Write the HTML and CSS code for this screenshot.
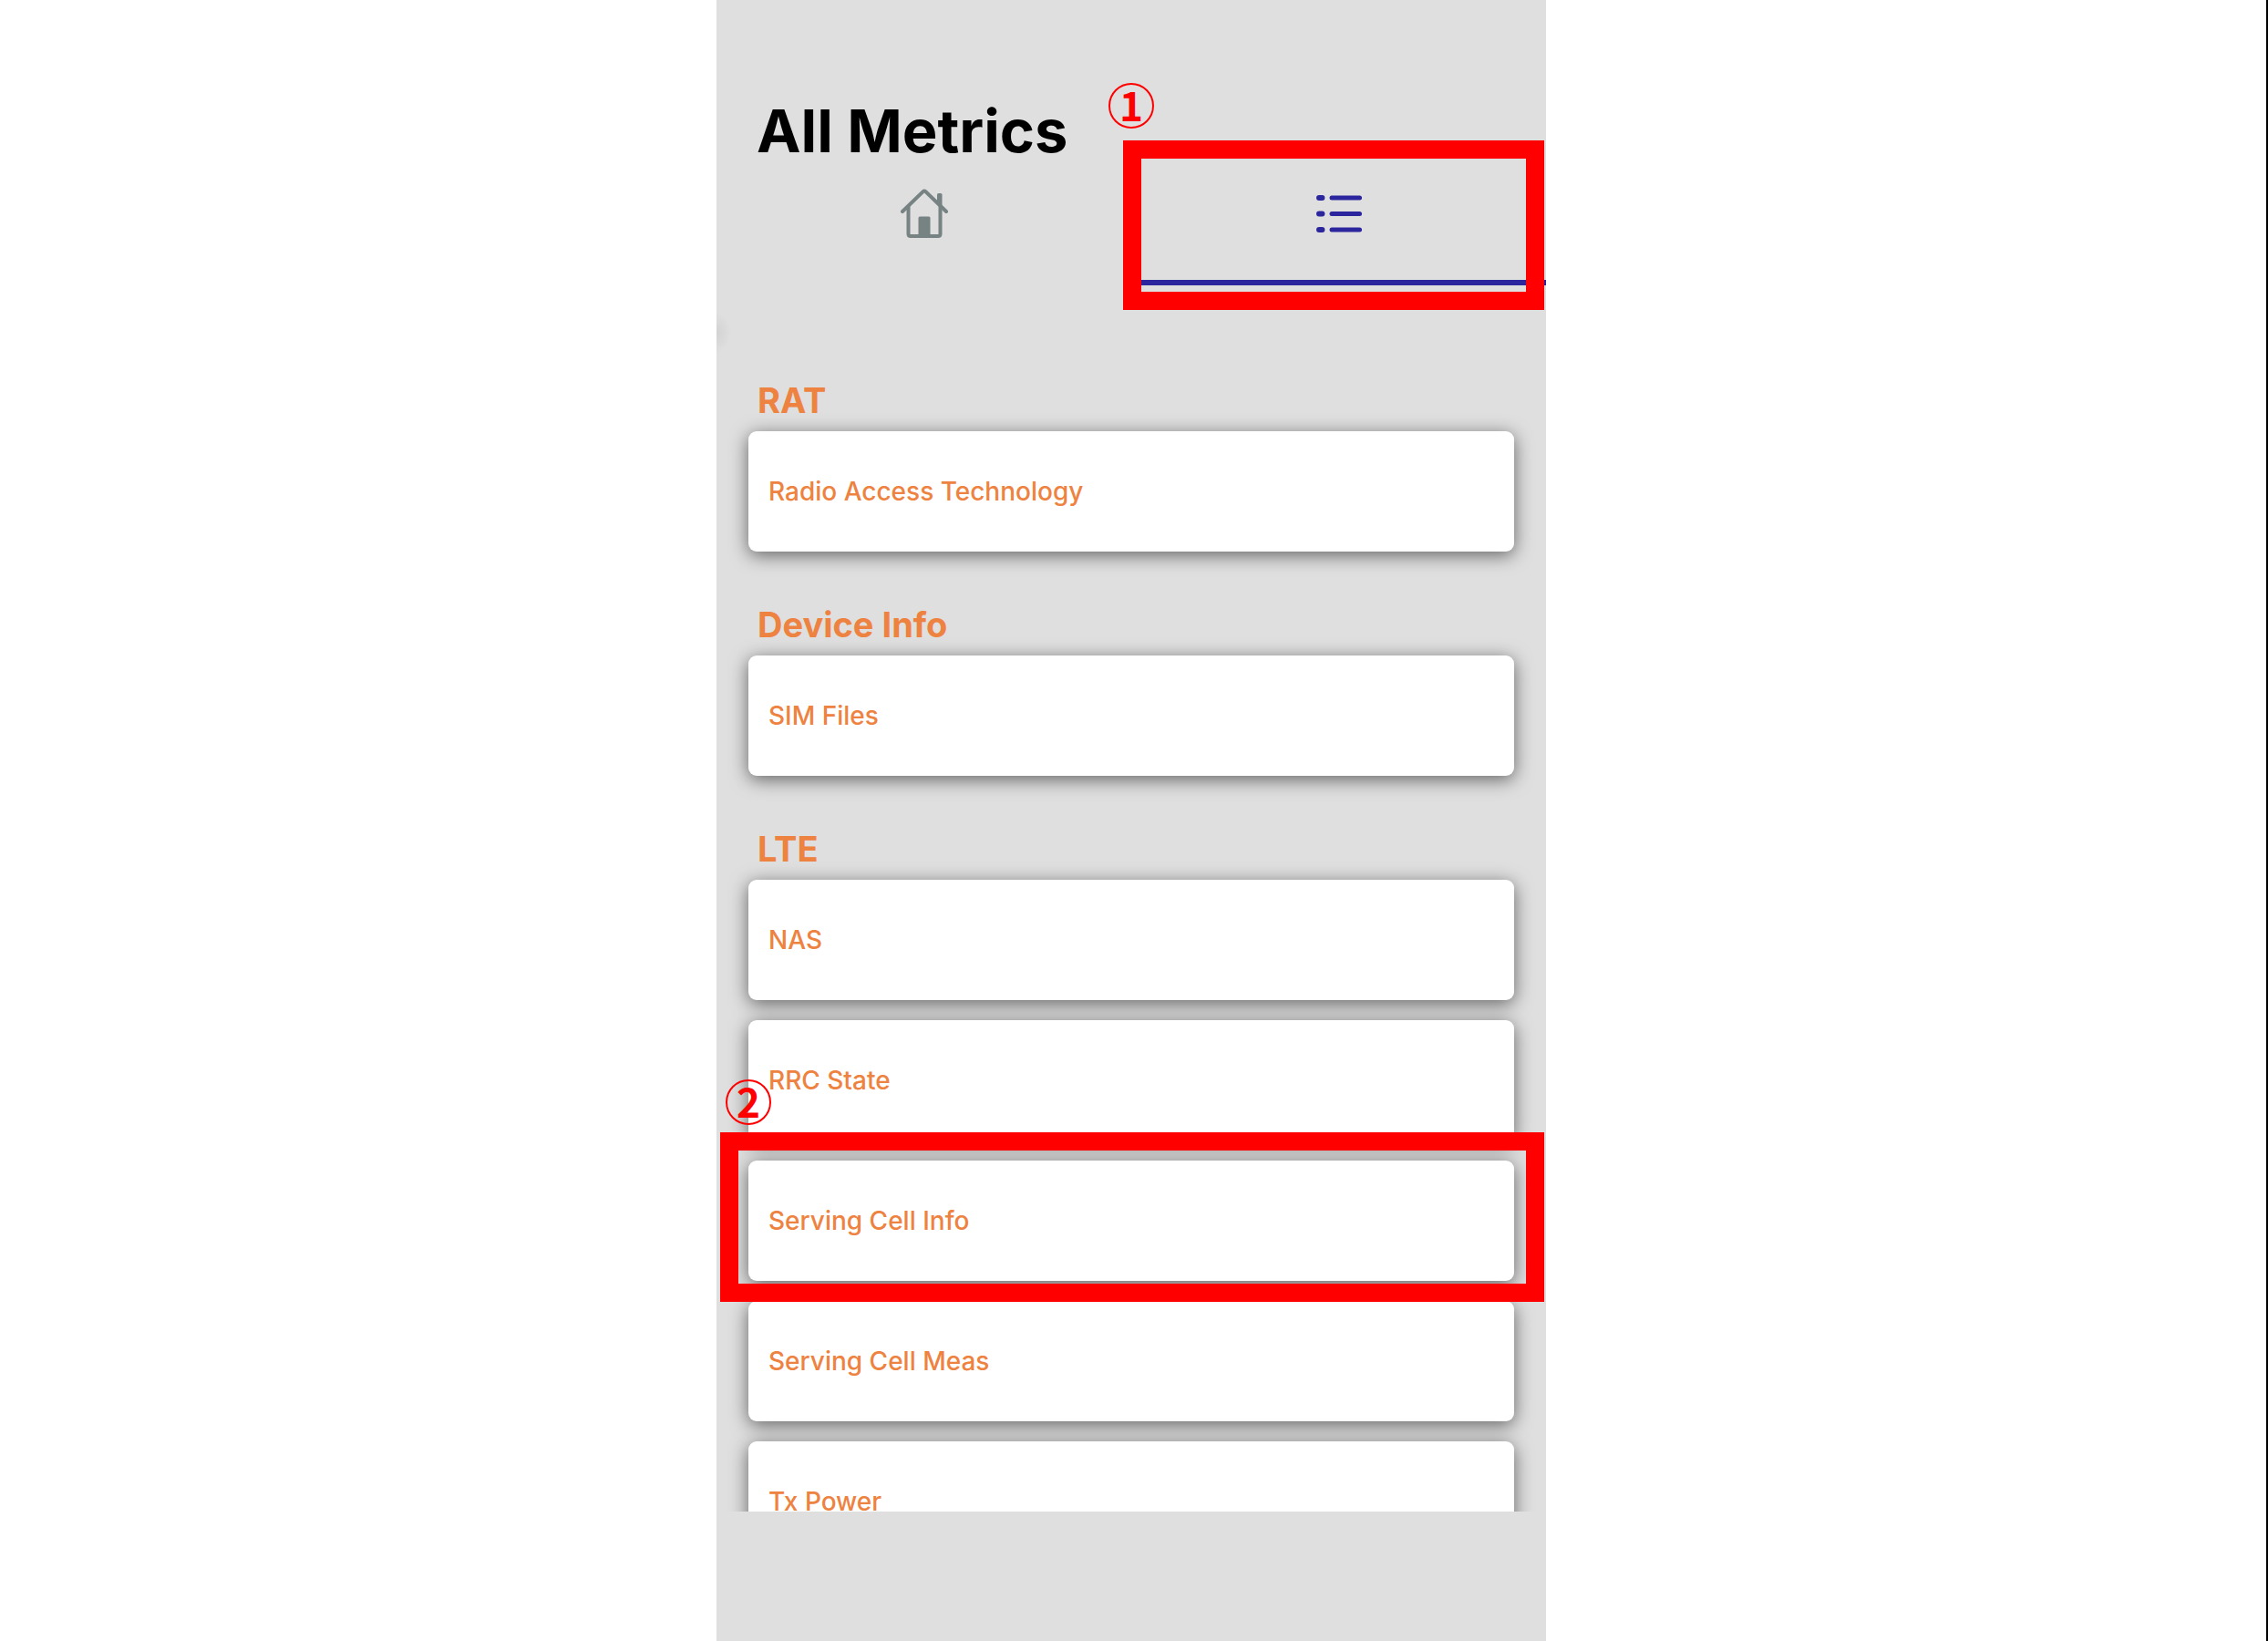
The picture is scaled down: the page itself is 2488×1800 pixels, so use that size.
FILE: index.html
```html
<!DOCTYPE html>
<html lang="en">
<head>
    <meta charset="UTF-8">
    <meta name="viewport" content="width=device-width, initial-scale=1.0">
    <title>All Metrics</title>
    <link rel="stylesheet" href="styles.css">
</head>
<body>
    <main class="Phone">
        <header class="Header">
            <h1>All Metrics</h1>
            <nav class="Tabs">
                <div class="Tab-Wrapper">
                    <button type="button" class="Tab" aria-label="Home">
                        <svg width="56" height="56" viewBox="0 0 56 56" fill="none" stroke="currentColor" stroke-width="4" stroke-linecap="round" stroke-linejoin="round">
                            <path d="M4 26L26.6 4.1Q28 2.7 29.4 4.1L52 26"/>
                            <path d="M10.5 21V50.5Q10.5 53 13 53H43Q45.5 53 45.5 50.5V21"/>
                            <path d="M42 17V7.6Q42 6 43.6 6H45.9Q47.5 6 47.5 7.6V22Z" fill="currentColor" stroke="none"/>
                            <path d="M21.5 53V33Q21.5 31.5 23 31.5H33Q34.5 31.5 34.5 33V53Z" fill="currentColor" stroke="none"/>
                        </svg>
                    </button>
                </div>
                <div class="Tab-Wrapper">
                    <button type="button" class="Tab Active" aria-label="List">
                        <svg width="56" height="56" viewBox="0 0 56 56" fill="currentColor">
                            <rect x="3" y="8" width="9.4" height="6" rx="3"/>
                            <rect x="17.5" y="8.5" width="35.5" height="5" rx="2.5"/>
                            <rect x="3" y="25.5" width="9.4" height="6" rx="3"/>
                            <rect x="17.5" y="26" width="35.5" height="5" rx="2.5"/>
                            <rect x="3" y="43" width="9.4" height="6" rx="3"/>
                            <rect x="17.5" y="43.5" width="35.5" height="5" rx="2.5"/>
                        </svg>
                    </button>
                    <div class="Marker Marker-Tab"><span class="Step">1</span></div>
                </div>
            </nav>
        </header>

        <div class="List">
            <section class="Group">
                <h2>RAT</h2>
                <a href="#rat" class="Card">Radio Access Technology</a>
            </section>
            <section class="Group">
                <h2>Device Info</h2>
                <a href="#sim" class="Card">SIM Files</a>
            </section>
            <section class="Group">
                <h2>LTE</h2>
                <a href="#nas" class="Card">NAS</a>
                <a href="#rrc" class="Card">RRC State</a>
                <div class="Card-Wrapper">
                    <a href="#cell-info" class="Card">Serving Cell Info</a>
                    <div class="Marker Marker-Card"><span class="Step">2</span></div>
                </div>
                <a href="#cell-meas" class="Card">Serving Cell Meas</a>
                <a href="#tx" class="Card">Tx Power</a>
            </section>
        </div>
    </main>
</body>
</html>
```
FILE: styles.css
```css
*{
    box-sizing: border-box;
    padding: 0;
    margin: 0;
}
body{
    height: 100vh;
    display: grid;
    grid-template-columns: 786fr 910fr 790fr;
    background-color: #fff;
    border-right: 2px solid #000;
    font-family: Inter, "Liberation Sans", sans-serif;
    overflow: hidden;
}
.Phone{
    grid-column: 2;
    height: 100vh;
    min-width: 0;
    padding-bottom: 142px;
    display: flex;
    flex-direction: column;
    background-color: #dfdfdf;
}

/* header and tabs */
.Header{
    position: relative;
    z-index: 1;
    padding-top: 104px;
}
.Header h1{
    padding-left: 44px;
    font-size: 65px;
    line-height: 80px;
    font-weight: 700;
    color: #000;
}
.Tabs{
    display: grid;
    grid-template-columns: 1fr 1fr;
}
.Tab-Wrapper, .Card-Wrapper{
    position: relative;
}
.Tab{
    width: 100%;
    padding: 22px 0 45px;
    display: flex;
    justify-content: center;
    border: none;
    border-bottom: 6px solid transparent;
    background: none;
    color: #778283;
    cursor: pointer;
}
.Tab.Active{
    color: #2c269e;
    border-bottom-color: #2c269e;
}

/* list of metrics */
.List{
    position: relative;
    flex: 1;
    min-height: 0;
    padding: 102px 35px 0;
    display: flex;
    flex-direction: column;
    gap: 56px;
    overflow: hidden;
}
.List::before{
    content: "";
    position: absolute;
    left: 0;
    top: 30px;
    width: 16px;
    height: 44px;
    background: radial-gradient(ellipse at left, rgba(0,0,0,0.06), transparent 70%);
}
.Group{
    display: flex;
    flex-direction: column;
    gap: 22px;
}
.Group h2{
    padding-left: 10px;
    margin-bottom: -12px;
    font-size: 38px;
    line-height: 48px;
    font-weight: 700;
    color: #ee8240;
}
.Card{
    height: 132px;
    padding: 0 22px;
    display: flex;
    align-items: center;
    border-radius: 9px;
    background-color: #fff;
    box-shadow: 0 4px 20px rgba(0,0,0,0.56);
    color: #ee8240;
    font-size: 28px;
    font-weight: 500;
    text-decoration: none;
}

/* numbered red frames over the screen */
.Marker{
    position: absolute;
    z-index: 2;
    border: 20px solid #f00;
    pointer-events: none;
}
.Marker-Tab{
    inset: -30px 2px -27px -9px;
}
.Marker-Card{
    inset: -31px -33px -23px -31px;
}
.Step{
    position: absolute;
    width: 50px;
    height: 50px;
    padding-bottom: 4px;
    display: flex;
    align-items: center;
    justify-content: center;
    border: 2px solid #f00;
    border-radius: 50%;
    color: #f00;
    font-family: "Noto Sans CJK JP", sans-serif;
    font-size: 44px;
    line-height: 42px;
    font-weight: 700;
}
.Marker-Tab .Step{
    left: -36px;
    top: -83px;
}
.Marker-Card .Step{
    left: -14px;
    top: -78px;
}
```
